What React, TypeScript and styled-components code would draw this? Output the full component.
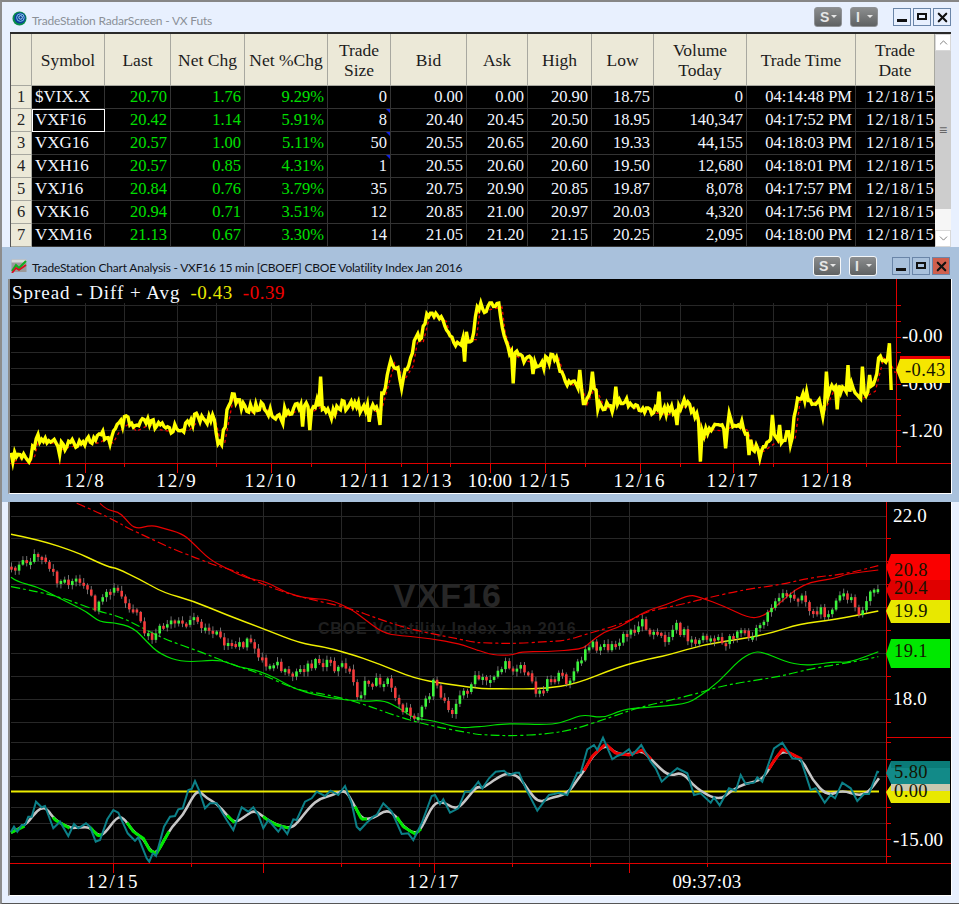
import React from "react";
import styled, { createGlobalStyle } from "styled-components";
import { ChevronDown, ChevronUp, X } from "lucide-react";

type Pt = [number, number];

const GlobalStyle = createGlobalStyle`
    html, body {
        margin: 0;
        padding: 0;
        background: #e8f0fe;
        overflow: hidden;
    }
`;

// chart data was read off the 3x crops, so it goes through this to get page coords
const trace = (left: Pt[], right: Pt[], top: number): Pt[] => [
    ...left.map(([x, y]): Pt => [x / 3, top + y / 3]),
    ...right.map(([x, y]): Pt => [479 + x / 3, top + y / 3]),
];

const interp = (pts: Pt[], x: number) => {
    if (x <= pts[0][0]) return pts[0][1];
    for (let i = 1; i < pts.length; i++) {
        if (x <= pts[i][0]) {
            const [x0, y0] = pts[i - 1];
            const [x1, y1] = pts[i];
            return y0 + ((y1 - y0) * (x - x0)) / (x1 - x0 || 1);
        }
    }
    return pts[pts.length - 1][1];
};

const noise = (i: number) => {
    const v = Math.sin(i * 12.9898) * 43758.5453;
    return v - Math.floor(v);
};

const poly = (pts: Pt[]) => pts.map(([x, y]) => `${x.toFixed(1)},${y.toFixed(1)}`).join(" ");

const smooth = (pts: Pt[]) => {
    let d = `M${pts[0][0].toFixed(1)} ${pts[0][1].toFixed(1)}`;
    for (let i = 1; i < pts.length - 1; i++) {
        const mx = (pts[i][0] + pts[i + 1][0]) / 2;
        const my = (pts[i][1] + pts[i + 1][1]) / 2;
        d += ` Q${pts[i][0].toFixed(1)} ${pts[i][1].toFixed(1)} ${mx.toFixed(1)} ${my.toFixed(1)}`;
    }
    const last = pts[pts.length - 1];
    return d + ` L${last[0].toFixed(1)} ${last[1].toFixed(1)}`;
};

/* ---------- spread chart ---------- */

const spreadBase = trace(
    [
        [33, 535], [60, 525], [80, 540], [95, 520], [110, 460], [125, 480], [150, 480], [175, 500], [190, 495],
        [230, 485], [260, 480], [290, 480], [310, 465], [330, 480], [350, 445], [380, 420], [400, 445], [420, 435],
        [440, 425], [470, 440], [500, 445], [530, 445], [560, 440], [590, 410], [640, 420], [655, 490], [665, 480],
        [690, 350], [720, 370], [750, 390], [790, 375], [810, 400], [840, 405], [880, 385], [900, 370], [930, 385],
        [960, 370], [990, 405], [1010, 380], [1050, 375], [1100, 385], [1135, 385], [1150, 330], [1175, 240],
        [1205, 290], [1230, 250], [1245, 170], [1260, 180], [1280, 100], [1330, 115], [1345, 170], [1380, 190],
        [1400, 170], [1420, 170], [1430, 90],
    ],
    [
        [-20, 90], [60, 72], [70, 150], [90, 210], [120, 230], [160, 240], [185, 255], [230, 225], [250, 290],
        [270, 305], [300, 310], [315, 365], [340, 310], [370, 380], [410, 355], [440, 360], [470, 385], [520, 390],
        [560, 395], [595, 385], [620, 360], [650, 400], [665, 470], [690, 440], [730, 445], [750, 430], [795, 440],
        [820, 500], [845, 505], [880, 480], [940, 465], [955, 350], [990, 350], [1030, 380], [1055, 325], [1110, 320],
        [1145, 345], [1180, 325], [1205, 225], [1225, 240], [1240, 270],
    ],
    280
);

const spreadSpikes = trace(
    [
        [178, 525], [655, 492], [910, 440], [850, 430], [930, 450], [960, 290], [1110, 425], [1140, 435], [1205, 325],
        [1395, 245],
    ],
    [
        [105, 310], [160, 282], [300, 270], [340, 275], [355, 388], [400, 395], [412, 320], [540, 335], [595, 435],
        [665, 545], [740, 505], [748, 400], [808, 525], [845, 535], [880, 405], [900, 435], [932, 495], [1033, 410],
        [1040, 275], [1075, 388], [1105, 255], [1148, 260], [1172, 285], [1230, 190], [1234, 330],
    ],
    280
);

const buildSpread = () => {
    const out: Pt[] = [];
    const end = spreadBase[spreadBase.length - 1][0];
    let i = 0;
    for (let x = 11; x <= end; x += 1.8, i++) {
        const spike = spreadSpikes.find(([sx]) => Math.abs(sx - x) <= 0.9);
        const y = spike ? spike[1] : interp(spreadBase, x) + (noise(i) - 0.5) * 11;
        out.push([x, Math.min(462, Math.max(303, y))]);
    }
    return out;
};

const spreadLine = buildSpread();
const spreadAvg = spreadBase.map(([x, y]): Pt => [x + 3, Math.min(462, Math.max(303, y + 3))]);

const spreadGridY = [305, 321, 337, 352, 368, 384, 399, 415, 430, 446];
const spreadGridX = [85, 124, 177, 216, 271, 311, 365, 401, 427, 450, 490, 545, 585, 640, 680, 733, 773, 827, 866];
const spreadLabels: [string, number][] = [
    ["12/8", 85],
    ["12/9", 177],
    ["12/10", 271],
    ["12/11", 365],
    ["12/13", 427],
    ["10:00", 490],
    ["12/15", 545],
    ["12/16", 640],
    ["12/17", 733],
    ["12/18", 827],
];

/* ---------- price chart ---------- */

const redSolid = trace(
    [
        [300, 10], [320, 30], [355, 35], [375, 55], [405, 88], [455, 75], [490, 85], [545, 100], [575, 125], [630, 180],
        [690, 210], [740, 235], [800, 245], [860, 280], [930, 297], [985, 297], [1050, 325], [1090, 355], [1150, 400],
        [1200, 407], [1290, 415], [1380, 432], [1430, 450],
    ],
    [
        [0, 452], [40, 465], [100, 466], [125, 455], [200, 455], [310, 448], [330, 430], [375, 395], [425, 380],
        [495, 335], [560, 315], [630, 285], [660, 290], [740, 320], [810, 355], [850, 350], [890, 320], [970, 250],
        [1070, 235], [1100, 222], [1198, 210],
    ],
    500
);
const redDash = trace(
    [
        [230, 10], [290, 35], [350, 65], [385, 85], [450, 115], [520, 148], [600, 178], [650, 198], [700, 210],
        [770, 245], [860, 280], [940, 300], [1050, 325], [1130, 355], [1220, 385], [1330, 408], [1430, 428],
    ],
    [
        [10, 428], [100, 431], [200, 425], [260, 422], [330, 400], [400, 380], [470, 355], [500, 335], [600, 315],
        [680, 295], [800, 268], [900, 255], [1000, 232], [1100, 222], [1198, 197],
    ],
    500
);
const yellowLine = trace(
    [
        [33, 103], [120, 120], [230, 157], [290, 185], [330, 202], [350, 205], [420, 238], [490, 278], [580, 303],
        [680, 345], [800, 390], [900, 430], [970, 440], [1040, 458], [1140, 492], [1240, 535], [1340, 552], [1430, 564],
    ],
    [
        [10, 566], [120, 567], [200, 565], [290, 552], [420, 500], [510, 476], [560, 467], [680, 432], [800, 415],
        [880, 398], [960, 372], [1070, 358], [1198, 333],
    ],
    500
);
const greenSolid = trace(
    [
        [33, 232], [50, 245], [110, 260], [160, 285], [210, 310], [260, 335], [300, 367], [340, 367], [400, 382],
        [440, 425], [480, 463], [550, 488], [660, 478], [710, 500], [770, 510], [830, 535], [890, 570], [990, 595],
        [1090, 605], [1150, 600], [1200, 625], [1240, 655], [1300, 662], [1380, 685], [1430, 680],
    ],
    [
        [10, 680], [80, 670], [220, 675], [270, 660], [310, 643], [375, 655], [430, 628], [500, 622], [620, 613],
        [660, 590], [720, 545], [780, 480], [820, 457], [850, 455], [920, 485], [970, 496], [1020, 493], [1060, 485],
        [1110, 488], [1198, 455],
    ],
    500
);
const greenDash = trace(
    [
        [33, 260], [130, 278], [200, 298], [300, 335], [360, 350], [430, 385], [500, 420], [600, 455], [700, 495],
        [780, 520], [890, 570], [990, 585], [1090, 612], [1180, 645], [1280, 675], [1430, 703],
    ],
    [
        [10, 704], [100, 708], [200, 702], [280, 690], [400, 650], [480, 622], [640, 585], [720, 560], [800, 545],
        [900, 530], [1000, 505], [1100, 490], [1198, 470],
    ],
    500
);
const candlePath = trace(
    [
        [33, 200], [60, 195], [110, 165], [150, 215], [170, 240], [230, 245], [260, 275], [290, 330], [330, 275],
        [350, 270], [380, 320], [410, 350], [440, 410], [465, 415], [490, 375], [560, 375], [590, 345], [615, 395],
        [650, 385], [690, 450], [735, 425], [770, 450], [800, 500], [820, 480], [870, 540], [890, 515], [930, 490],
        [960, 480], [1010, 510], [1040, 490], [1075, 590], [1100, 550], [1160, 540], [1215, 635], [1250, 645],
        [1300, 555], [1355, 630], [1400, 565], [1430, 535],
    ],
    [
        [20, 545], [70, 500], [125, 495], [180, 580], [210, 530], [270, 540], [300, 490], [330, 440], [360, 435],
        [405, 445], [430, 415], [490, 365], [520, 395], [555, 420], [590, 375], [645, 430], [680, 410], [730, 430],
        [790, 380], [810, 420], [850, 370], [890, 295], [970, 285], [1000, 340], [1040, 335], [1095, 285], [1140, 330],
        [1200, 260],
    ],
    500
);

const candles = (() => {
    const list: { x: number; top: number; bottom: number; high: number; low: number; up: boolean }[] = [];
    let prev = interp(candlePath, 11);
    let i = 0;
    for (let x = 11.5; x < 880; x += 3.8, i++) {
        const close = interp(candlePath, x) + (noise(i + 40) - 0.5) * 11;
        const up = close < prev;
        const top = Math.min(prev, close);
        const bottom = Math.max(Math.max(prev, close), top + 3);
        list.push({ x, top, bottom, high: top - 1 - noise(i + 90) * 4, low: bottom + 1 + noise(i + 130) * 4, up });
        prev = close;
    }
    return list;
})();

/* ---------- oscillator ---------- */

const tealLine = trace(
    [
        [33, 335], [42, 320], [52, 335], [65, 315], [75, 315], [85, 290], [95, 290], [108, 245], [125, 262], [135, 258],
        [160, 325], [180, 305], [205, 348], [222, 312], [235, 325], [258, 310], [270, 320], [287, 365], [300, 360],
        [322, 298], [340, 270], [355, 278], [383, 340], [405, 362], [415, 352], [440, 415], [448, 425], [458, 400],
        [468, 408], [492, 320], [510, 290], [525, 288], [535, 268], [548, 265], [565, 210], [575, 207], [585, 183],
        [597, 210], [615, 265], [630, 250], [650, 250], [680, 300], [700, 330], [725, 262], [745, 275], [760, 262],
        [775, 285], [790, 325], [805, 300], [835, 335], [845, 320], [862, 342], [880, 298], [890, 300], [915, 245],
        [935, 235], [950, 215], [975, 228], [992, 212], [1015, 225], [1035, 198], [1055, 250], [1070, 320], [1080, 330],
        [1100, 308], [1120, 290], [1130, 285], [1150, 250], [1175, 275], [1205, 342], [1225, 340], [1240, 360],
        [1265, 310], [1295, 228], [1305, 225], [1320, 252], [1330, 238], [1350, 278], [1375, 265], [1395, 215],
        [1410, 215], [1420, 205], [1435, 185],
    ],
    [
        [10, 205], [30, 175], [50, 155], [75, 152], [90, 165], [110, 158], [120, 158], [140, 205], [175, 272],
        [210, 225], [225, 222], [240, 218], [265, 225], [295, 158], [305, 158], [325, 88], [345, 75], [355, 90],
        [372, 53], [400, 118], [415, 108], [430, 102], [450, 88], [460, 105], [487, 75], [515, 125], [530, 145],
        [548, 185], [570, 165], [595, 145], [625, 160], [645, 225], [665, 220], [695, 248], [705, 232], [722, 256],
        [750, 205], [770, 212], [785, 165], [800, 192], [825, 188], [835, 172], [850, 185], [885, 85], [910, 68],
        [940, 115], [965, 118], [995, 210], [1010, 205], [1037, 248], [1055, 225], [1068, 235], [1090, 188],
        [1115, 205], [1135, 243], [1155, 222], [1170, 222], [1195, 155], [1200, 157],
    ],
    720
);
const grayLine = trace(
    [
        [33, 338], [75, 318], [100, 285], [120, 265], [140, 265], [165, 300], [210, 325], [240, 322], [270, 322],
        [295, 348], [315, 340], [350, 292], [370, 292], [400, 335], [430, 355], [450, 392], [470, 400], [490, 365],
        [515, 320], [550, 285], [575, 235], [595, 210], [620, 235], [650, 250], [680, 285], [705, 310], [740, 285],
        [765, 270], [800, 298], [830, 315], [870, 325], [890, 312], [930, 260], [960, 235], [1000, 225], [1035, 208],
        [1060, 250], [1085, 298], [1120, 295], [1160, 268], [1190, 290], [1210, 320], [1245, 342], [1265, 325],
        [1300, 250], [1330, 245], [1360, 265], [1380, 260], [1410, 225], [1430, 200],
    ],
    [
        [10, 203], [25, 195], [60, 170], [85, 160], [120, 168], [150, 215], [180, 248], [210, 235], [265, 222],
        [295, 180], [315, 152], [340, 108], [380, 72], [410, 100], [450, 105], [490, 90], [520, 122], [570, 170],
        [610, 155], [650, 205], [720, 243], [760, 210], [800, 190], [850, 180], [880, 130], [910, 88], [970, 118],
        [1000, 180], [1045, 228], [1090, 210], [1140, 228], [1170, 215], [1200, 175],
    ],
    720
);

const oscGreen: Pt[] = [[11, 25], [53, 70], [90, 103], [127, 170], [227, 235], [263, 290], [355, 367], [397, 422]];
const oscRed: Pt[] = [[584, 606], [606, 652], [769, 802]];
const segment = ([a, b]: Pt) => {
    const pts: Pt[] = [];
    for (let x = a; x <= b; x += 1.5) pts.push([x, interp(grayLine, x)]);
    return poly(pts);
};

const mainGridY = [516, 538, 561, 584, 607, 630, 653, 676, 699, 722];
const oscGridY = [742, 759, 776, 807, 823, 839, 856];
const mainGridX: [number, boolean][] = [
    [113, true],
    [191, false],
    [263, true],
    [341, false],
    [419, false],
    [434, true],
    [512, false],
    [590, false],
    [629, true],
    [707, false],
];

/* ---------- quote table ---------- */

const columns = "21px 73px 66px 74px 83px 63px 76px 61px 64px 62px 93px 109px 79px";

const headers = [
    "",
    "Symbol",
    "Last",
    "Net Chg",
    "Net %Chg",
    "Trade|Size",
    "Bid",
    "Ask",
    "High",
    "Low",
    "Volume|Today",
    "Trade Time",
    "Trade|Date",
];

const rows = [
    ["$VIX.X", "20.70", "1.76", "9.29%", "0", "0.00", "0.00", "20.90", "18.75", "0", "04:14:48 PM"],
    ["VXF16", "20.42", "1.14", "5.91%", "8", "20.40", "20.45", "20.50", "18.95", "140,347", "04:17:52 PM"],
    ["VXG16", "20.57", "1.00", "5.11%", "50", "20.55", "20.65", "20.60", "19.33", "44,155", "04:18:03 PM"],
    ["VXH16", "20.57", "0.85", "4.31%", "1", "20.55", "20.60", "20.60", "19.50", "12,680", "04:18:01 PM"],
    ["VXJ16", "20.84", "0.76", "3.79%", "35", "20.75", "20.90", "20.85", "19.87", "8,078", "04:17:57 PM"],
    ["VXK16", "20.94", "0.71", "3.51%", "12", "20.85", "21.00", "20.97", "20.03", "4,320", "04:17:56 PM"],
    ["VXM16", "21.13", "0.67", "3.30%", "14", "21.05", "21.20", "21.15", "20.25", "2,095", "04:18:00 PM"],
];

const App = () => (
    <>
        <GlobalStyle />
        <Screen>
            <RadarWindow>
                <TitleBar>
                    <RadarIcon />
                    <TitleText>TradeStation RadarScreen - VX Futs</TitleText>
                    <WindowControls />
                </TitleBar>
                <TableArea>
                    <Grid>
                        <GridRow>
                            {headers.map((h, i) => (
                                <HeaderCell key={i}>
                                    {h.split("|").map((line) => (
                                        <span key={line}>{line}</span>
                                    ))}
                                </HeaderCell>
                            ))}
                        </GridRow>
                        {rows.map((row, r) => (
                            <GridRow key={row[0]}>
                                <RowNumber>{r + 1}</RowNumber>
                                <SymbolCell $selected={r === 1}>{row[0]}</SymbolCell>
                                {row.slice(1, 4).map((v, i) => (
                                    <Cell key={i} $green>
                                        {v}
                                    </Cell>
                                ))}
                                <Cell $flagged={r >= 1 && r <= 3}>{row[4]}</Cell>
                                {row.slice(5).map((v, i) => (
                                    <Cell key={i}>{v}</Cell>
                                ))}
                                <DateCell>12/18/15</DateCell>
                            </GridRow>
                        ))}
                    </Grid>
                    <ScrollBar>
                        <ScrollButton>
                            <ChevronUp size={13} strokeWidth={1.5} color="#666" />
                        </ScrollButton>
                        <ScrollThumb>≡</ScrollThumb>
                        <ScrollTrack />
                        <ScrollButton>
                            <ChevronDown size={13} strokeWidth={1.5} color="#666" />
                        </ScrollButton>
                    </ScrollBar>
                </TableArea>
            </RadarWindow>

            <SpreadWindow>
                <TitleBar $active>
                    <ChartIcon />
                    <TitleText $active>TradeStation Chart Analysis - VXF16 15 min [CBOEF] CBOE Volatility Index Jan 2016</TitleText>
                    <WindowControls $active />
                </TitleBar>
                <ChartFrame>
                    <Legend>
                        Spread - Diff + Avg<LegendValue $color="#e8e800">-0.43</LegendValue>
                        <LegendValue $color="#f00000">-0.39</LegendValue>
                    </Legend>
                    <ChartSvg width={941} height={214} viewBox="10 279 941 214">
                        <g shapeRendering="crispEdges">
                            {spreadGridY.map((y) => (
                                <line key={y} x1={11} x2={896} y1={y} y2={y} stroke="#272727" />
                            ))}
                            {spreadGridX.map((x) => (
                                <line key={x} x1={x} x2={x} y1={303} y2={463} stroke="#272727" />
                            ))}
                            <line x1={896} x2={896} y1={279} y2={463} stroke="#e00000" />
                            <line x1={10} x2={951} y1={463} y2={463} stroke="#e00000" />
                            {spreadGridY.map((y) => (
                                <line key={y} x1={896} x2={901} y1={y} y2={y} stroke="#e00000" />
                            ))}
                            {spreadGridX.map((x) => (
                                <line
                                    key={x}
                                    x1={x}
                                    x2={x}
                                    y1={463}
                                    y2={spreadLabels.some((l) => l[1] === x) ? 473 : 467}
                                    stroke="#e00000"
                                />
                            ))}
                        </g>
                        <polyline points={poly(spreadAvg)} fill="none" stroke="#f00000" strokeWidth={1.3} strokeDasharray="3 3" />
                        <polyline
                            points={poly(spreadLine)}
                            fill="none"
                            stroke="#ffff00"
                            strokeWidth={3.4}
                            strokeLinejoin="miter"
                            strokeMiterlimit={6}
                        />
                        {spreadLabels.map(([t, x]) => (
                            <AxisText key={t} x={x} y={487} textAnchor="middle" $date={t.includes("/")}>
                                {t}
                            </AxisText>
                        ))}
                        <AxisText x={902} y={342}>
                            -0.00
                        </AxisText>
                        <AxisText x={902} y={390}>
                            -0.60
                        </AxisText>
                        <AxisText x={902} y={437}>
                            -1.20
                        </AxisText>
                        <PriceTag top={356} bottom={383} tip={370} tipX={896} fill="#f5e600" />
                        <rect x={900} y={356} width={50} height={3} fill="#e80000" />
                        <TagText x={905} y={376}>
                            -0.43
                        </TagText>
                    </ChartSvg>
                </ChartFrame>
            </SpreadWindow>

            <PriceWindow>
                <ChartFrame>
                    <ChartSvg width={941} height={393} viewBox="10 502 941 393">
                        <g shapeRendering="crispEdges">
                            {[...mainGridY, ...oscGridY].map((y) => (
                                <line key={y} x1={11} x2={886} y1={y} y2={y} stroke="#272727" />
                            ))}
                            {mainGridX.map(([x]) => (
                                <line key={x} x1={x} x2={x} y1={502} y2={863} stroke="#272727" />
                            ))}
                        </g>
                        <Watermark x={393} y={607}>
                            VXF16
                        </Watermark>
                        <WatermarkSub x={318} y={634}>
                            CBOE Volatility Index Jan 2016
                        </WatermarkSub>

                        <path d={smooth(redSolid)} fill="none" stroke="#e80000" strokeWidth={1.2} />
                        <path d={smooth(redDash)} fill="none" stroke="#f00000" strokeWidth={1.2} strokeDasharray="9 3 3 3" />
                        <path d={smooth(yellowLine)} fill="none" stroke="#f0f000" strokeWidth={1.4} />
                        <path d={smooth(greenSolid)} fill="none" stroke="#00e000" strokeWidth={1.2} />
                        <path d={smooth(greenDash)} fill="none" stroke="#00e800" strokeWidth={1.2} strokeDasharray="9 3 3 3" />

                        {candles.map((c) => (
                            <line key={c.x} x1={c.x} x2={c.x} y1={c.high} y2={c.low} stroke="#8c8c8c" strokeWidth={0.8} />
                        ))}
                        {candles.map((c) => (
                            <CandleBody
                                key={c.x}
                                x={c.x - 1.3}
                                y={c.top}
                                width={2.6}
                                height={c.bottom - c.top}
                                $up={c.up}
                            />
                        ))}

                        <line x1={11} x2={879} y1={791.5} y2={791.5} stroke="#ecec00" strokeWidth={2} />
                        <path d={smooth(grayLine)} fill="none" stroke="#c6c6c6" strokeWidth={2.6} />
                        {oscGreen.map((r) => (
                            <polyline key={r[0]} points={segment(r)} fill="none" stroke="#00e800" strokeWidth={3} />
                        ))}
                        {oscRed.map((r) => (
                            <polyline key={r[0]} points={segment(r)} fill="none" stroke="#f00000" strokeWidth={3} />
                        ))}
                        <polyline points={poly(tealLine)} fill="none" stroke="#0c8088" strokeWidth={2} />

                        <g shapeRendering="crispEdges">
                            <line x1={886} x2={886} y1={502} y2={863} stroke="#e00000" />
                            <line x1={886} x2={951} y1={737} y2={737} stroke="#e00000" />
                            <line x1={10} x2={951} y1={863} y2={863} stroke="#e00000" />
                            {[...mainGridY.slice(1), ...oscGridY, 792].map((y) => (
                                <line key={y} x1={886} x2={891} y1={y} y2={y} stroke="#e00000" />
                            ))}
                            {mainGridX.map(([x, tall]) => (
                                <line key={x} x1={x} x2={x} y1={863} y2={tall ? 873 : 867} stroke="#e00000" />
                            ))}
                        </g>

                        <AxisText x={893} y={522}>
                            22.0
                        </AxisText>
                        <AxisText x={893} y={705}>
                            18.0
                        </AxisText>
                        <AxisText x={893} y={846}>
                            -15.00
                        </AxisText>

                        <PriceTag top={554} bottom={581} tip={567} fill="#fa0000" />
                        <PriceTag top={580} bottom={601} tip={590} fill="#e00000" />
                        <PriceTag top={600} bottom={623} tip={611} fill="#e8e800" />
                        <PriceTag top={639} bottom={668} tip={654} fill="#00e800" />
                        <PriceTag top={785} bottom={803} tip={792} fill="#e8e800" />
                        <rect x={891} y={783} width={59} height={8} fill="#c8c8b0" />
                        <PriceTag top={761} bottom={784} tip={773} fill="#128a88" />
                        <rect x={891} y={761} width={59} height={7} fill="#0a7b78" />

                        <TagText x={894} y={576}>
                            20.8
                        </TagText>
                        <TagText x={894} y={594}>
                            20.4
                        </TagText>
                        <TagText x={894} y={617}>
                            19.9
                        </TagText>
                        <TagText x={894} y={657}>
                            19.1
                        </TagText>
                        <TagText x={894} y={797}>
                            0.00
                        </TagText>
                        <TagText x={894} y={778}>
                            5.80
                        </TagText>

                        <AxisText x={113} y={888} textAnchor="middle" $date>
                            12/15
                        </AxisText>
                        <AxisText x={434} y={888} textAnchor="middle" $date>
                            12/17
                        </AxisText>
                        <AxisText x={707} y={888} textAnchor="middle">
                            09:37:03
                        </AxisText>
                    </ChartSvg>
                </ChartFrame>
            </PriceWindow>
        </Screen>
    </>
);

const PriceTag = ({
    top,
    bottom,
    tip,
    fill,
    tipX = 886,
}: {
    top: number;
    bottom: number;
    tip: number;
    fill: string;
    tipX?: number;
}) => (
    <polygon
        points={`${tipX},${tip} ${tipX + 5},${top} 950,${top} 950,${bottom} ${tipX + 5},${bottom}`}
        fill={fill}
    />
);

const WindowControls = ({ $active }: { $active?: boolean }) => (
    <Controls $active={$active}>
        <MenuButton $active={$active}>S</MenuButton>
        <MenuButton $active={$active}>I</MenuButton>
        <WindowBoxes>
            <WindowBox $glyph="min" />
            <WindowBox $glyph="max" />
            <WindowBox $close={$active}>
                <X size={15} strokeWidth={3.4} color="#111" />
            </WindowBox>
        </WindowBoxes>
    </Controls>
);

const RadarIcon = () => (
    <IconSvg width={15} height={15} viewBox="0 0 15 15">
        <circle cx={7.5} cy={7.5} r={7} fill="#0a8f4a" />
        <circle cx={8} cy={7} r={5.6} fill="#0b3f9c" />
        <circle cx={8.4} cy={6.6} r={3.8} fill="none" stroke="#7fc4e8" strokeWidth={1} />
        <circle cx={8.6} cy={6.4} r={1.8} fill="none" stroke="#a9dcf0" strokeWidth={1} />
    </IconSvg>
);

const ChartIcon = () => (
    <IconSvg width={16} height={14} viewBox="0 0 16 14">
        <rect x={0.5} y={0.5} width={15} height={12.5} fill="#9a9a9a" />
        <rect x={0.5} y={0.5} width={15} height={3} fill="#d8d8d8" />
        <polyline points="1,12 5,6 8,9 15,2" fill="none" stroke="#10b020" strokeWidth={2} />
        <polyline points="1,14 5,9 8,11 15,6" fill="none" stroke="#d81020" strokeWidth={1.8} />
    </IconSvg>
);

const Screen = styled.div`
    width: 959px;
    height: 904px;
    display: flex;
    flex-direction: column;
    background: #e8f0fe;
    overflow: hidden;
    font-family: "Liberation Serif", serif;
`;

const RadarWindow = styled.section`
    height: 245px;
    flex: none;
    box-sizing: content-box;
    display: flex;
    flex-direction: column;
    padding: 0 8px 0 6px;
    border-top: 2px solid #868686;
    border-left: 2px solid #8c8c8c;
    background: #e8f0fe;
`;

const TitleBar = styled.header<{ $active?: boolean }>`
    box-sizing: border-box;
    height: ${(p) => (p.$active ? "32px" : "30px")};
    flex: none;
    display: flex;
    align-items: center;
    gap: 5px;
    padding: ${(p) => (p.$active ? "6px 0 0 3px" : "3px 0 0 4px")};
`;

const IconSvg = styled.svg`
    flex: none;
`;

const TitleText = styled.h1<{ $active?: boolean }>`
    flex: 1;
    margin: ${(p) => (p.$active ? "2px" : "3px")} 0 0;
    font: 400 12px "Lato", "Open Sans", sans-serif;
    letter-spacing: -0.2px;
    white-space: nowrap;
    color: ${(p) => (p.$active ? "#10131a" : "#8b9098")};
`;

const Controls = styled.div<{ $active?: boolean }>`
    display: flex;
    align-items: center;
    gap: 8px;
    margin: ${(p) => (p.$active ? "0 1px 0 0" : "-3px 0 0")};
`;

const MenuButton = styled.div<{ $active?: boolean }>`
    position: relative;
    box-sizing: border-box;
    width: 28px;
    height: 20px;
    padding-left: 5px;
    border-radius: 3px;
    border: 1px solid ${(p) => (p.$active ? "#f4f6f8" : "#8f9296")};
    background: linear-gradient(#8b8d8e, #5f6263);
    color: #e6e6e6;
    font: 700 14px/18px "Liberation Sans", sans-serif;

    &::after {
        content: "";
        position: absolute;
        right: 4px;
        top: 7px;
        border-left: 3px solid transparent;
        border-right: 3px solid transparent;
        border-top: 3px solid #e6e6e6;
    }
`;

const WindowBoxes = styled.div`
    display: flex;
    gap: 2px;
    margin-left: 7px;
`;

const WindowBox = styled.div<{ $glyph?: "min" | "max"; $close?: boolean }>`
    box-sizing: border-box;
    width: 18px;
    height: 18px;
    display: flex;
    align-items: center;
    justify-content: center;
    border: 1px solid #6a85a8;
    background: ${(p) => (p.$close ? "#cf5f4d" : "transparent")};

    &::before {
        content: ${(p) => (p.$glyph ? '""' : "none")};
        box-sizing: border-box;
        width: 10px;
        height: ${(p) => (p.$glyph === "min" ? "3px" : "7px")};
        margin-top: ${(p) => (p.$glyph === "min" ? "7px" : "-1px")};
        background: ${(p) => (p.$glyph === "min" ? "#111" : "transparent")};
        border: ${(p) => (p.$glyph === "max" ? "2px solid #111" : "none")};
    }
`;

const TableArea = styled.div`
    flex: 1;
    margin-left: 2px;
    display: flex;
    border-top: 2px solid #2a2a2a;
    min-height: 0;
`;

const Grid = styled.div`
    width: 925px;
    flex: none;
    box-sizing: border-box;
    background: #000;
    border-left: 1px solid #555;
`;

const GridRow = styled.div`
    display: grid;
    grid-template-columns: ${columns};
    grid-auto-rows: 23px;

    &:first-child {
        grid-auto-rows: 52px;
    }
`;

const HeaderCell = styled.div`
    box-sizing: border-box;
    display: flex;
    flex-direction: column;
    align-items: center;
    justify-content: center;
    background: #ece9d8;
    border-right: 1px solid #a8a8a0;
    border-bottom: 1px solid #a8a8a0;
    color: #1c1c1c;
    font-size: 17.5px;
    line-height: 20px;
    white-space: nowrap;
`;

const RowNumber = styled.div`
    box-sizing: border-box;
    background: #ece9d8;
    border-right: 1px solid #a8a8a0;
    border-bottom: 1px solid #a8a8a0;
    text-align: center;
    color: #222;
    font-size: 16.5px;
    line-height: 22px;
`;

const Cell = styled.div<{ $green?: boolean; $flagged?: boolean }>`
    position: relative;
    box-sizing: border-box;
    padding-right: 3px;
    border-right: 1px solid #333;
    border-bottom: 1px solid #333;
    text-align: right;
    color: ${(p) => (p.$green ? "#00e000" : "#f2f6ff")};
    font-size: 16.5px;
    line-height: 22px;
    white-space: nowrap;

    &::after {
        content: ${(p) => (p.$flagged ? '""' : "none")};
        position: absolute;
        top: 0;
        right: 0;
        border-top: 4px solid #1020e0;
        border-left: 4px solid transparent;
    }
`;

const SymbolCell = styled(Cell)<{ $selected?: boolean }>`
    padding: 0 0 0 3px;
    text-align: left;
    font-size: 17px;
    outline: ${(p) => (p.$selected ? "1px solid #fff" : "none")};
    outline-offset: -1px;
`;

const DateCell = styled(Cell)`
    padding-right: 0;
    letter-spacing: 1.3px;
    border-right: none;
`;

const ScrollBar = styled.div`
    width: 16px;
    flex: none;
    display: flex;
    flex-direction: column;
    background: #f1f1f1;
`;

const ScrollButton = styled.div`
    height: 17px;
    flex: none;
    display: flex;
    align-items: center;
    justify-content: center;
    background: #fff;
    border: 1px solid #d8d8d8;
    box-sizing: border-box;
`;

const ScrollThumb = styled.div`
    height: 158px;
    flex: none;
    display: flex;
    align-items: center;
    justify-content: center;
    background: #cdcdcd;
    color: #666;
    font: 14px "Liberation Sans", sans-serif;
`;

const ScrollTrack = styled.div`
    flex: 1;
    background: #f6f6f6;
`;

const SpreadWindow = styled.section`
    height: 255px;
    flex: none;
    box-sizing: border-box;
    padding: 0 8px 0 6px;
    background: #a9c1dc;
    border-left: 2px solid #8c8c8c;
`;

const PriceWindow = styled.section`
    flex: 1;
    padding: 0 8px 7px 6px;
    background: #e8f0fe;
    border-left: 2px solid #8c8c8c;
    border-bottom: 2px solid #555;
`;

const ChartFrame = styled.div`
    position: relative;
    width: 941px;
    background: #000;
    border-left: 2px solid #8a8a8a;
    border-bottom: 1px solid #fff;
    border-right: 1px solid #fff;
    margin-right: -2px;
    font-size: 0;
`;

const ChartSvg = styled.svg`
    display: block;
    font-family: "Liberation Serif", serif;
`;

const Legend = styled.div`
    position: absolute;
    left: 2px;
    top: 3px;
    color: #f4f8ff;
    font: 400 19px/22px "Liberation Serif", serif;
    letter-spacing: 0.95px;
    white-space: nowrap;
    z-index: 1;
`;

const LegendValue = styled.span<{ $color: string }>`
    margin-left: 10px;
    letter-spacing: 0.55px;
    color: ${(p) => p.$color};
`;

const AxisText = styled.text<{ $date?: boolean }>`
    fill: #fff;
    font-size: 19px;
    letter-spacing: ${(p) => (p.$date ? "1.9px" : "0.2px")};
`;

const TagText = styled.text`
    fill: #141400;
    font-size: 18.5px;
    letter-spacing: 0.4px;
`;

const Watermark = styled.text`
    fill: #272727;
    font: 700 34px "Liberation Sans", sans-serif;
    letter-spacing: 1px;
`;

const WatermarkSub = styled.text`
    fill: #1f1f1f;
    font: 700 16px "Liberation Sans", sans-serif;
    letter-spacing: 0.8px;
`;

const CandleBody = styled.rect<{ $up: boolean }>`
    fill: ${(p) => (p.$up ? "#3cf53c" : "#f53c3c")};
`;

export default App;
